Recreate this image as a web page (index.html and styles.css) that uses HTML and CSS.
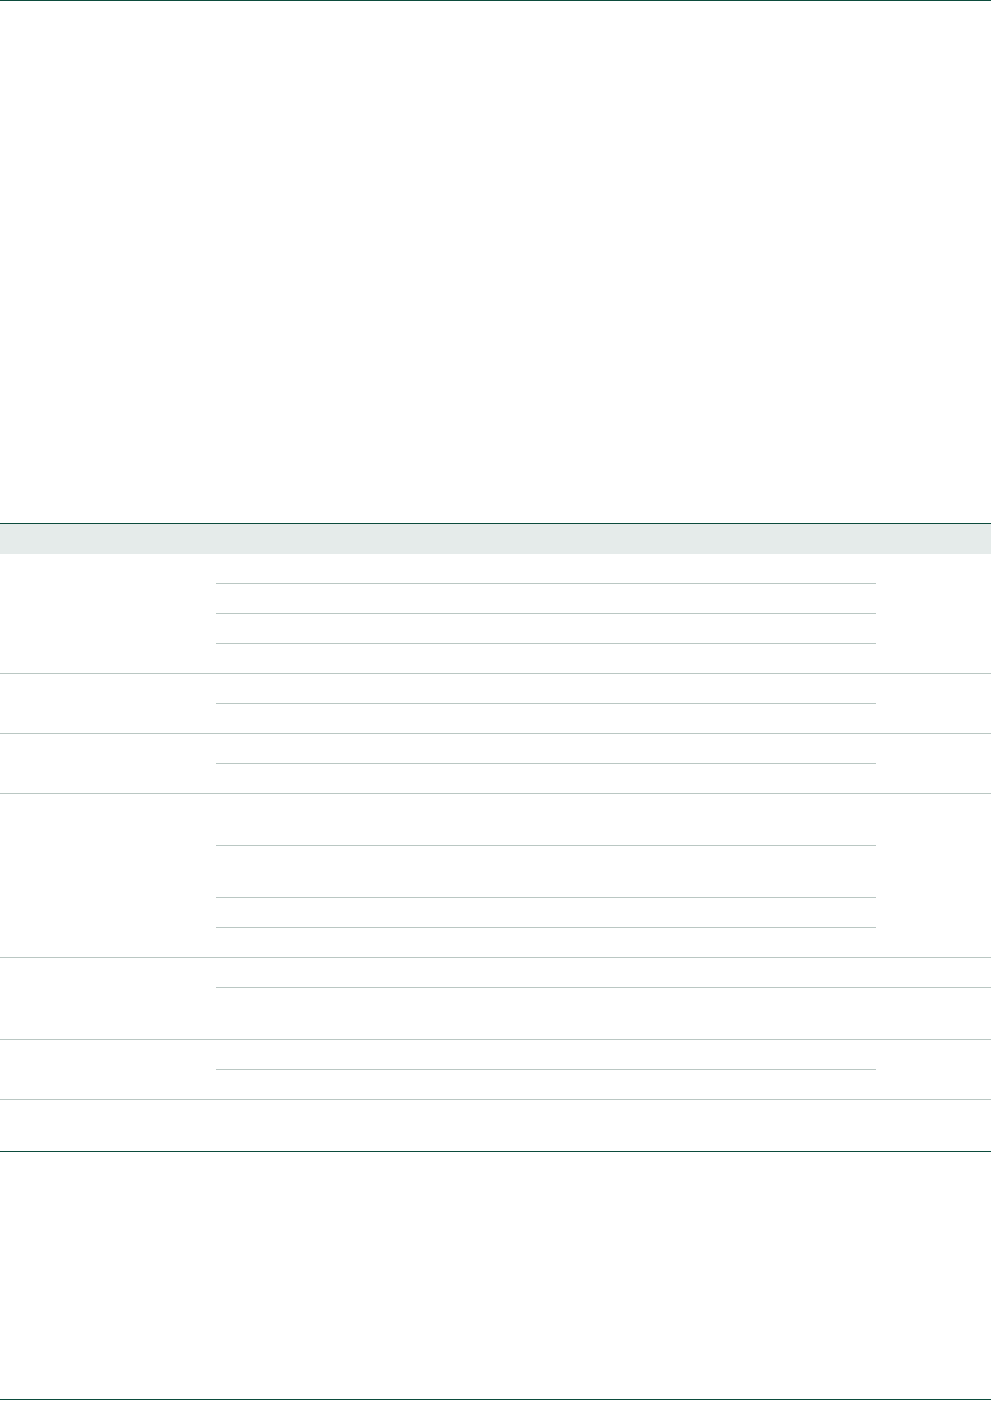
FILE: index.html
```html
<!DOCTYPE html>
<html lang="en">
<head>
    <meta charset="UTF-8">
    <title>Table</title>
    <meta name="viewport" content="width=device-width, initial-scale=1.0">
    <link rel="stylesheet" href="styles.css">
</head>
<body>

<div class="page">
    <table class="spec-table">
        <colgroup>
            <col class="col-group">
            <col class="col-item">
            <col class="col-note">
        </colgroup>
        <thead>
            <tr><th></th><th></th><th></th></tr>
        </thead>
        <tbody>
            <!-- group 1 -->
            <tr>
                <td class="group" rowspan="4"></td>
                <td class="sub"></td>
                <td class="group" rowspan="4"></td>
            </tr>
            <tr><td class="sub"></td></tr>
            <tr><td class="sub"></td></tr>
            <tr><td class="sub last"></td></tr>

            <!-- group 2 -->
            <tr>
                <td class="group" rowspan="2"></td>
                <td class="sub"></td>
                <td class="group" rowspan="2"></td>
            </tr>
            <tr><td class="sub last"></td></tr>

            <!-- group 3 -->
            <tr>
                <td class="group" rowspan="2"></td>
                <td class="sub"></td>
                <td class="group" rowspan="2"></td>
            </tr>
            <tr><td class="sub last"></td></tr>

            <!-- group 4 -->
            <tr class="tall">
                <td class="group" rowspan="4"></td>
                <td class="sub"></td>
                <td class="group" rowspan="4"></td>
            </tr>
            <tr class="tall"><td class="sub"></td></tr>
            <tr><td class="sub"></td></tr>
            <tr><td class="sub last"></td></tr>

            <!-- group 5 -->
            <tr>
                <td class="group" rowspan="2"></td>
                <td class="sub"></td>
                <td class="sub"></td>
            </tr>
            <tr class="tall">
                <td class="sub last"></td>
                <td class="sub last"></td>
            </tr>

            <!-- group 6 -->
            <tr>
                <td class="group" rowspan="2"></td>
                <td class="sub"></td>
                <td class="group" rowspan="2"></td>
            </tr>
            <tr><td class="sub last"></td></tr>

            <!-- group 7 -->
            <tr class="tall">
                <td class="group"></td>
                <td class="sub last"></td>
                <td class="group"></td>
            </tr>
        </tbody>
    </table>
</div>

</body>
</html>
```

FILE: styles.css
```css
* {
    box-sizing: border-box;
}

body {
    margin: 0;
    background: #fff;
    font-family: 'Liberation Sans', Arial, sans-serif;
    font-size: 13px;
}

.page {
    height: 1400px;
    border-top: 1px solid #0c4c3d;
    border-bottom: 1px solid #0c4c3d;
    padding-top: 522px;
}

.spec-table {
    width: 100%;
    border-collapse: separate;
    border-spacing: 0;
    table-layout: fixed;
    border-top: 1px solid #0c4c3d;
    border-bottom: 1px solid #0c4c3d;
}

.col-group {
    width: 216px;
}

.col-item {
    width: 660px;
}

.spec-table th {
    height: 30px;
    padding: 0;
    background: #e5ebea;
}

.spec-table td {
    height: 30px;
    padding: 0;
    border-bottom: 1px solid #bac7c3;
}

.spec-table tr.tall td {
    height: 52px;
}

/* the last row of the table sits on the dark rule */
.spec-table tbody tr:last-child td {
    border-bottom: none;
    height: 51px;
}
```
